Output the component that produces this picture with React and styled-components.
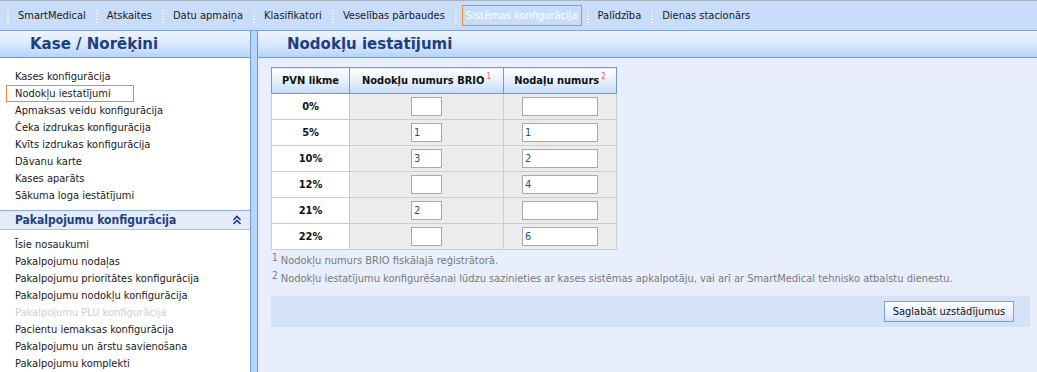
import React from "react";
import styled, { createGlobalStyle } from "styled-components";

const GlobalStyle = createGlobalStyle`
  html, body { margin: 0; padding: 0; }
  body {
    font-family: "DejaVu Sans Condensed", "DejaVu Sans", "Liberation Sans", sans-serif;
    font-stretch: condensed;
    font-size: 11px;
    color: #1a1a1a;
  }
`;

const Page = styled.div`
  width: 1037px;
  height: 372px;
  display: flex;
  flex-direction: column;
  overflow: hidden;
`;

const MenuBar = styled.div`
  height: 29px;
  flex: none;
  display: flex;
  align-items: center;
  padding-left: 7px;
  background: #c8ddf9;
  border-top: 1px solid #a9b4c2;
  border-bottom: 1px solid #7da3da;
`;

const Sep = styled.span`
  width: 2px;
  height: 14px;
  margin: 0 9px 0 0;
  background-image: radial-gradient(circle, #ffffff 0.9px, transparent 1px);
  background-size: 2px 3px;
  background-repeat: repeat-y;
  flex: none;
`;

const MenuItem = styled.span`
  margin-right: ${(p) => (p.$active ? "5px" : "10px")};
  padding: ${(p) => (p.$active ? "3px 3px" : "0")};
  margin-left: ${(p) => (p.$active ? "-4px" : "0")};
  border: ${(p) => (p.$active ? "1px solid #f08a2a" : "none")};
  color: ${(p) => (p.$active ? "#ffffff" : "#1a1a1a")};
  white-space: nowrap;
  line-height: 13px;
`;

const Main = styled.div`
  flex: 1;
  display: flex;
  min-height: 0;
`;

const LeftPanel = styled.div`
  width: 250px;
  flex: none;
  background: #ffffff;
  border-right: 1px solid #6d9ad8;
  display: flex;
  flex-direction: column;
`;

const Splitter = styled.div`
  width: 6px;
  flex: none;
  background: #b9d5fb;
  border-right: 1px solid #6d9ad8;
`;

const RightPanel = styled.div`
  flex: 1;
  background: #e8eefb;
  display: flex;
  flex-direction: column;
  min-width: 0;
`;

const PanelHeader = styled.div`
  height: 26px;
  flex: none;
  display: flex;
  align-items: center;
  padding-left: ${(p) => p.$indent}px;
  background: linear-gradient(#eef5ff, #d6e7fd 55%, #b6d4fb);
  border-bottom: 1px solid #6d9ad8;
  font-family: "DejaVu Sans", sans-serif;
  font-stretch: normal;
  font-weight: bold;
  font-size: 15px;
  color: #1e3f80;
`;

const NavList = styled.div`
  display: flex;
  flex-direction: column;
  padding: ${(p) => p.$pad};
`;

const NavItem = styled.div`
  height: 17px;
  line-height: 17px;
  padding-left: 9px;
  margin-left: 6px;
  width: ${(p) => (p.$selected ? "128px" : "auto")};
  white-space: nowrap;
  box-sizing: border-box;
  color: ${(p) => (p.$disabled ? "#cfcfcf" : "#1a1a1a")};
  outline: ${(p) => (p.$selected ? "1px solid #f08a2a" : "none")};
  outline-offset: -1px;
`;

const SectionHeader = styled.div`
  height: 18px;
  display: flex;
  align-items: center;
  justify-content: space-between;
  padding: 0 8px 0 15px;
  background: #e4ecfc;
  border-top: 1px solid #8fb2e4;
  border-bottom: 1px solid #a9c4ec;
  font-weight: bold;
  font-size: 12px;
  color: #1e3f80;
`;

const Content = styled.div`
  padding: 9px 7px 0 13px;
  display: flex;
  flex-direction: column;
`;

const Table = styled.table`
  border-collapse: collapse;
  width: 346px;
`;

const Th = styled.th`
  height: 25px;
  padding: 0;
  border: 1px solid #6d9ad8;
  background: linear-gradient(#ffffff, #e6f0fd 50%, #c4dcfb);
  font-weight: bold;
  font-size: 11px;
  color: #111;
  width: ${(p) => p.$w}px;
  white-space: nowrap;
`;

const Sup = styled.sup`
  color: ${(p) => p.$color};
  font-size: 8px;
  font-weight: normal;
  vertical-align: top;
  position: relative;
  top: -2px;
  margin-left: 2px;
`;

const Td = styled.td`
  height: 25px;
  padding: 0;
  border: 1px solid #cdcdcd;
  background: ${(p) => (p.$label ? "#ffffff" : "#ececec")};
  text-align: center;
  font-weight: ${(p) => (p.$label ? "bold" : "normal")};
  color: #111;
`;

const Input = styled.input`
  box-sizing: border-box;
  width: ${(p) => p.$w}px;
  height: 19px;
  border: 1px solid #a9a9a9;
  background: #fff;
  padding: 0 2px;
  font: inherit;
  font-size: 11px;
  color: #1f4e9c;
  display: block;
  margin: 0 auto;
  outline: none;
`;

const Notes = styled.div`
  padding: 4px 0 0 1px;
  color: #7a7a7a;
  display: flex;
  flex-direction: column;
  gap: 4px;
`;

const Note = styled.div`
  line-height: 14px;
  white-space: nowrap;
`;

const NoteNum = styled.span`
  font-size: 10px;
  position: relative;
  top: -3px;
  margin-right: 3px;
`;

const ButtonBar = styled.div`
  margin-top: 10px;
  height: 31px;
  background: #d4e2f9;
  display: flex;
  align-items: center;
  justify-content: flex-end;
  padding-right: 16px;
`;

const Button = styled.button`
  height: 21px;
  width: 130px;
  border: 1px solid #7aa0d8;
  background: linear-gradient(#ffffff, #e8f0fb 60%, #d2e2f7);
  font: inherit;
  font-size: 11px;
  color: #111;
  padding: 0;
`;

const menu = [
  "SmartMedical",
  "Atskaites",
  "Datu apmaiņa",
  "Klasifikatori",
  "Veselības pārbaudes",
  "Sistēmas konfigurācija",
  "Palīdzība",
  "Dienas stacionārs",
];

const kase = [
  "Kases konfigurācija",
  "Nodokļu iestatījumi",
  "Apmaksas veidu konfigurācija",
  "Čeka izdrukas konfigurācija",
  "Kvīts izdrukas konfigurācija",
  "Dāvanu karte",
  "Kases aparāts",
  "Sākuma loga iestātījumi",
];

const pak = [
  "Īsie nosaukumi",
  "Pakalpojumu nodaļas",
  "Pakalpojumu prioritātes konfigurācija",
  "Pakalpojumu nodokļu konfigurācija",
  "Pakalpojumu PLU konfigurācija",
  "Pacientu iemaksas konfigurācija",
  "Pakalpojumu un ārstu savienošana",
  "Pakalpojumu komplekti",
];

const rows = [
  ["0%", "", ""],
  ["5%", "1", "1"],
  ["10%", "3", "2"],
  ["12%", "", "4"],
  ["21%", "2", ""],
  ["22%", "", "6"],
];

const Chevrons = () => (
  <svg width="10" height="10" viewBox="0 0 10 10">
    <path d="M1.5 5 L5 1.5 L8.5 5 M1.5 9 L5 5.5 L8.5 9" fill="none" stroke="#1e3f80" strokeWidth="1.6" />
  </svg>
);

export default function App() {
  return (
    <Page>
      <GlobalStyle />
      <MenuBar>
        {menu.map((m) => (
          <React.Fragment key={m}>
            <Sep />
            <MenuItem $active={m === "Sistēmas konfigurācija"}>{m}</MenuItem>
          </React.Fragment>
        ))}
      </MenuBar>
      <Main>
        <LeftPanel>
          <PanelHeader $indent={30}>Kase / Norēķini</PanelHeader>
          <NavList $pad="10px 0 6px 0">
            {kase.map((k) => (
              <NavItem key={k} $selected={k === "Nodokļu iestatījumi"}>
                {k}
              </NavItem>
            ))}
          </NavList>
          <SectionHeader>
            <span>Pakalpojumu konfigurācija</span>
            <Chevrons />
          </SectionHeader>
          <NavList $pad="6px 0 0 0">
            {pak.map((k) => (
              <NavItem key={k} $disabled={k === "Pakalpojumu PLU konfigurācija"}>
                {k}
              </NavItem>
            ))}
          </NavList>
        </LeftPanel>
        <Splitter />
        <RightPanel>
          <PanelHeader $indent={29}>Nodokļu iestatījumi</PanelHeader>
          <Content>
            <Table>
              <thead>
                <tr>
                  <Th $w={78}>PVN likme</Th>
                  <Th $w={154}>
                    Nodokļu numurs BRIO<Sup $color="#f06060">1</Sup>
                  </Th>
                  <Th $w={113}>
                    Nodaļu numurs<Sup $color="#f06060">2</Sup>
                  </Th>
                </tr>
              </thead>
              <tbody>
                {rows.map(([rate, a, b]) => (
                  <tr key={rate}>
                    <Td $label>{rate}</Td>
                    <Td>
                      <Input $w={31} defaultValue={a} />
                    </Td>
                    <Td>
                      <Input $w={76} defaultValue={b} />
                    </Td>
                  </tr>
                ))}
              </tbody>
            </Table>
            <Notes>
              <Note>
                <NoteNum>1</NoteNum>Nodokļu numurs BRIO fiskālajā reģistrātorā.
              </Note>
              <Note>
                <NoteNum>2</NoteNum>Nodokļu iestatījumu konfigurēšanai lūdzu sazinieties ar kases sistēmas apkalpotāju, vai arī ar SmartMedical tehnisko atbalstu dienestu.
              </Note>
            </Notes>
            <ButtonBar>
              <Button>Saglabāt uzstādījumus</Button>
            </ButtonBar>
          </Content>
        </RightPanel>
      </Main>
    </Page>
  );
}
